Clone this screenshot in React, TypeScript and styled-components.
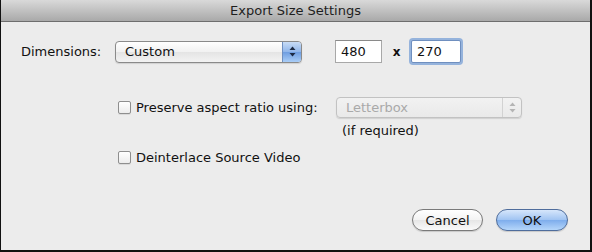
import styled, { createGlobalStyle } from "styled-components";

const GlobalStyle = createGlobalStyle`
  html, body {
    margin: 0;
    padding: 0;
    background: #000;
  }
  body {
    font-family: "DejaVu Sans", "Liberation Sans", sans-serif;
  }
`;

const Stepper = ({ disabled }: { disabled?: boolean }) => (
  <StepperBox $disabled={disabled}>
    <svg width="7" height="11" viewBox="0 0 7 11">
      <path d="M3.5 0.5 L6.5 4 L0.5 4 Z" fill={disabled ? "#b4b4b4" : "#1c2a44"} />
      <path d="M3.5 10.5 L6.5 7 L0.5 7 Z" fill={disabled ? "#b4b4b4" : "#1c2a44"} />
    </svg>
  </StepperBox>
);

const Checkbox = ({ label }: { label: string }) => (
  <CheckLabel>
    <Box />
    <span>{label}</span>
  </CheckLabel>
);

export default function App() {
  return (
    <>
      <GlobalStyle />
      <Window>
        <TitleBar>Export Size Settings</TitleBar>
        <Body>
          <DimRow>
            <Label>Dimensions:</Label>
            <Select $width={187}>
              <SelectText>Custom</SelectText>
              <Stepper />
            </Select>
            <SizeInput $width={47}>480</SizeInput>
            <Times>x</Times>
            <SizeInput $width={50} $focused>
              270
            </SizeInput>
          </DimRow>
          <AspectRow>
            <Checkbox label="Preserve aspect ratio using:" />
            <Select $width={186} $disabled>
              <SelectText $disabled>Letterbox</SelectText>
              <Stepper disabled />
            </Select>
          </AspectRow>
          <Note>(if required)</Note>
          <DeinterlaceRow>
            <Checkbox label="Deinterlace Source Video" />
          </DeinterlaceRow>
          <Footer>
            <Button>Cancel</Button>
            <Button $primary>OK</Button>
          </Footer>
        </Body>
      </Window>
    </>
  );
}

const Window = styled.div`
  width: 592px;
  height: 252px;
  box-sizing: border-box;
  border-left: 1px solid #111;
  border-right: 2px solid #111;
  border-bottom: 2px solid #111;
  background: #ececec;
  display: flex;
  flex-direction: column;
  overflow: hidden;
`;

const TitleBar = styled.div`
  height: 22px;
  box-sizing: border-box;
  border-bottom: 1px solid #6e6e6e;
  background: linear-gradient(#d9d9d9, #a9a9a9);
  color: #1e1e1e;
  font-size: 13px;
  line-height: 22px;
  text-align: center;
`;

const Body = styled.div`
  flex: 1;
  display: flex;
  flex-direction: column;
  padding: 18px 22px 0 20px;
  color: #111;
  font-size: 13px;
`;

const DimRow = styled.div`
  display: flex;
  align-items: center;
  height: 23px;
`;

const Label = styled.div`
  width: 94px;
`;

const Select = styled.div<{ $width: number; $disabled?: boolean }>`
  width: ${(p) => p.$width}px;
  height: ${(p) => (p.$disabled ? 21 : 22)}px;
  box-sizing: border-box;
  display: flex;
  align-items: stretch;
  border: 1px solid ${(p) => (p.$disabled ? "#c2c2c2" : "#8a8a8a")};
  border-radius: 4px;
  background: ${(p) =>
    p.$disabled
      ? "linear-gradient(#f2f2f2, #e9e9e9)"
      : "linear-gradient(#ffffff, #f1f1f1 50%, #e4e4e4 51%, #f3f3f3)"};
  box-shadow: 0 1px 1px rgba(0, 0, 0, 0.12);
  overflow: hidden;
`;

const SelectText = styled.div<{ $disabled?: boolean }>`
  flex: 1;
  padding-left: 9px;
  display: flex;
  align-items: center;
  color: ${(p) => (p.$disabled ? "#a9a9a9" : "#111")};
`;

const StepperBox = styled.div<{ $disabled?: boolean }>`
  width: 18px;
  display: flex;
  align-items: center;
  justify-content: center;
  border-left: 1px solid ${(p) => (p.$disabled ? "#d2d2d2" : "#6f8fc0")};
  background: ${(p) =>
    p.$disabled
      ? "transparent"
      : "linear-gradient(#c8dcf6, #8fb5ea 50%, #6e9de0 51%, #a9cdf7)"};
`;

const SizeInput = styled.div<{ $width: number; $focused?: boolean }>`
  width: ${(p) => p.$width}px;
  height: 23px;
  box-sizing: border-box;
  margin-left: ${(p) => (p.$focused ? 0 : 33)}px;
  padding-left: 5px;
  display: flex;
  align-items: center;
  background: #fff;
  border: 1px solid ${(p) => (p.$focused ? "#6f8fbf" : "#a8a8a8")};
  border-top-color: ${(p) => (p.$focused ? "#6f8fbf" : "#8a8a8a")};
  box-shadow: ${(p) =>
    p.$focused ? "0 0 0 2px rgba(120, 160, 215, 0.75)" : "none"};
  border-radius: ${(p) => (p.$focused ? 2 : 0)}px;
`;

const Times = styled.div`
  width: 29px;
  text-align: center;
  font-weight: bold;
  font-size: 12px;
`;

const AspectRow = styled.div`
  display: flex;
  align-items: center;
  height: 21px;
  margin-top: 34px;
  padding-left: 97px;
  gap: 18px;
`;

const CheckLabel = styled.label`
  display: flex;
  align-items: center;
  gap: 5px;
  width: 200px;
`;

const Box = styled.span`
  width: 13px;
  height: 13px;
  box-sizing: border-box;
  border: 1px solid #8e8e8e;
  border-radius: 2px;
  background: linear-gradient(#ffffff, #ececec);
  box-shadow: 0 1px 0 rgba(0, 0, 0, 0.08);
`;

const Note = styled.div`
  margin-top: 5px;
  padding-left: 321px;
  height: 16px;
  line-height: 16px;
`;

const DeinterlaceRow = styled.div`
  display: flex;
  align-items: center;
  height: 18px;
  margin-top: 9px;
  padding-left: 97px;
`;

const Footer = styled.div`
  margin-top: auto;
  margin-bottom: 19px;
  display: flex;
  justify-content: flex-end;
  gap: 13px;
`;

const Button = styled.button<{ $primary?: boolean }>`
  width: ${(p) => (p.$primary ? 72 : 71)}px;
  height: 22px;
  padding: 0;
  font-family: inherit;
  font-size: 13px;
  color: #111;
  border-radius: 11px;
  border: 1px solid ${(p) => (p.$primary ? "#4f6d9c" : "#7a7a7a")};
  background: ${(p) =>
    p.$primary
      ? "linear-gradient(#d6e6fb, #9fc3f2 50%, #7eadec 51%, #b5d6fa)"
      : "linear-gradient(#ffffff, #f3f3f3 50%, #e6e6e6 51%, #fafafa)"};
  box-shadow: 0 1px 1px rgba(0, 0, 0, 0.15);
`;
